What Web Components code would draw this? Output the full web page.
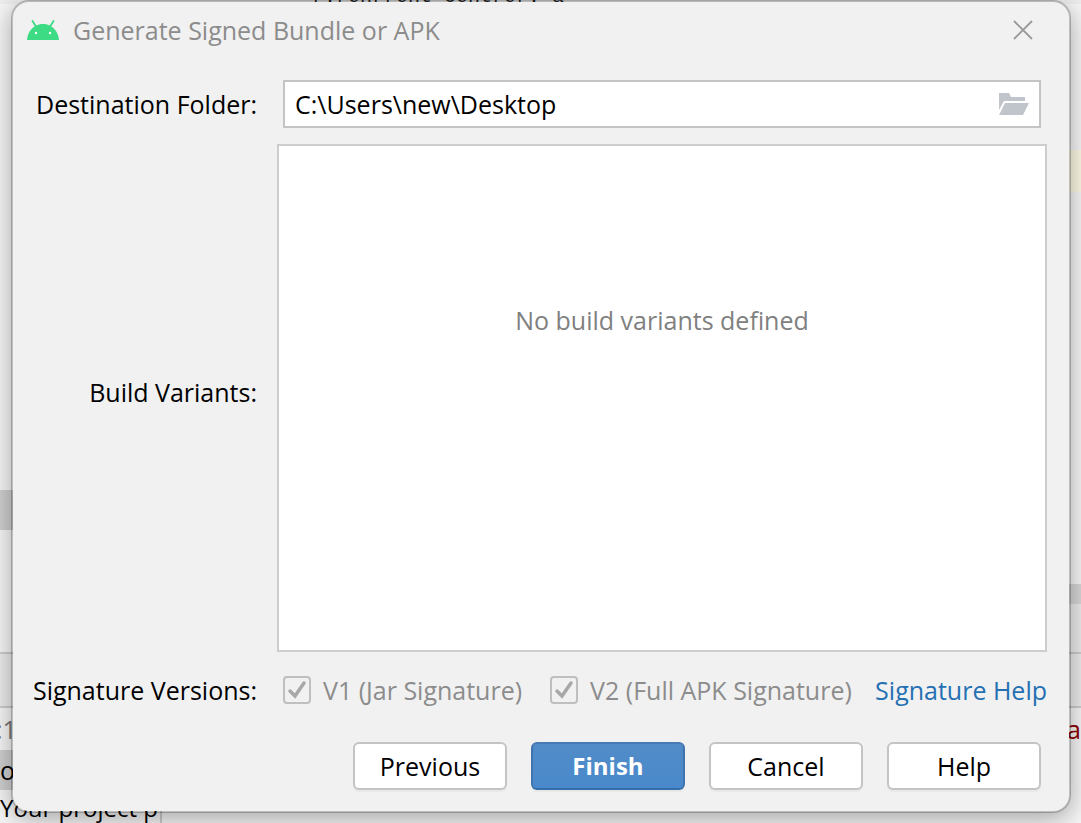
<!DOCTYPE html>
<html lang="en">
<head>
<meta charset="utf-8">
<title>Generate Signed Bundle or APK</title>
<style>
html,body{margin:0;height:100%}
body{font:25px/32px "Open Sans","Noto Sans",sans-serif;color:#000;overflow:hidden}
</style>
</head>
<body>
<app-screen></app-screen>
<script>
const define=(name,html)=>customElements.define(name,class extends HTMLElement{
  constructor(){
    super();
    const t=document.createElement('template');
    t.innerHTML=html;
    this.attachShadow({mode:'open'}).append(t.content.cloneNode(true));
  }
});

define('ide-backdrop',`
<style>
:host{position:absolute;inset:0;background:#f5f5f5;overflow:hidden;display:flex;flex-direction:column}
.code{height:4px;display:flex;align-items:flex-end;padding-left:312px;background:#ededed;font:20px/14px "Liberation Mono",monospace;white-space:pre;color:#222}
.sides{flex:1;display:flex;justify-content:space-between}
.side{width:162px;display:flex;flex-direction:column;white-space:nowrap}
.right{width:14px}
.gap{height:486px}.mark{height:40px;background:#cfcfcf}.blank{height:122px}
.panel{height:52px;background:#ebebeb;border:solid #ccc;border-width:2px 0}
.line{height:42px;line-height:42px}
.num{color:#777;text-indent:-4px}.sel{background:#cfcfcf;height:40px;line-height:40px}
.msg{border-right:2px solid #ccc;font-size:24px;line-height:36px}
.hint{height:42px;background:#fcf8e4;margin-top:146px}
.stripe{height:20px;background:#d6d6d6;margin-top:392px}
.tab{height:48px;background:#ebebeb}
.err{color:#8b0000;text-align:right}
</style>
<div class="code">r:ronrront contror: a</div>
<div class="sides">
  <div class="side"><div class="gap"></div><div class="mark"></div><div class="blank"></div><div class="panel"></div><div class="line num">:1</div><div class="line sel">o</div><div class="line msg">Your project p</div></div>
  <div class="side right"><div class="hint"></div><div class="stripe"></div><div class="tab"></div><div class="panel"></div><div class="line err">a</div></div>
</div>`);

define('android-icon',`
<style>:host{display:block;width:32px;height:20px}svg{display:block}</style>
<svg width="32" height="20" viewBox="0 0 32 20"><path d="M0 20C.6 13 4 8.500 8.500 6 11 4.600 13 4 16 4S21 4.600 23.500 6C28 8.500 31.400 13 32 20Z" fill="#3ddc84"/><path d="M5.500 1 9.500 7.500M26.500 1 22.500 7.500" stroke="#3ddc84" stroke-width="1.800" stroke-linecap="round"/><circle cx="9" cy="13" r="1.200" fill="#fff"/><circle cx="23" cy="13" r="1.200" fill="#fff"/></svg>`);

define('title-bar',`
<style>
:host{display:flex;align-items:center;height:56px;padding:0 34px 0 14px;color:#8c8c8c}
h1{font:inherit;margin:0 auto 0 14px}
button{border:0;background:none;padding:0;width:24px;height:24px;display:grid;place-items:center}
</style>
<android-icon></android-icon><h1><slot></slot></h1>
<button aria-label="Close"><svg width="20" height="20" viewBox="0 0 20 20"><path d="M1 1 19 19M19 1 1 19" stroke="#999" stroke-width="1.800"/></svg></button>`);

define('folder-field',`
<style>
:host{display:block}
.row{display:grid;grid-template-columns:244px 1fr;column-gap:26px;align-items:center}
label{text-align:right;white-space:nowrap}
.box{display:flex;align-items:center;height:44px;border:2px solid #c4c4c4;background:#fff;margin-right:6px;padding:0 10px}
input{flex:1;min-width:0;border:0;outline:0;padding:0;background:none;font:inherit;color:inherit}
button{border:0;background:none;padding:0;width:30px;height:22px}
svg{display:block}
</style>
<div class="row"><label for="dest"><slot></slot></label>
<div class="box"><input id="dest" value="C:\\Users\\new\\Desktop"><button aria-label="Browse"><svg width="30" height="22" viewBox="0 0 30 22"><path d="M0 0H10L12 4H26V8H5L0 17ZM6 10H30L24 22H0Z" fill="#bfc5ca"/></svg></button></div></div>`);

define('variant-list',`
<style>
:host{display:grid;grid-template-columns:244px 1fr;column-gap:20px;align-items:stretch}
.label{text-align:right;align-self:center;padding-bottom:12px}
.list{border:2px solid #cdcdcd;background:#fff;color:#808080;text-align:center;padding-top:158px}
</style>
<div class="label" id="l">Build Variants:</div><div class="list" role="listbox" aria-labelledby="l"><slot></slot></div>`);

define('check-option',`
<style>
:host{display:block;color:#8c8c8c}
label{display:flex;align-items:center;gap:12px;white-space:nowrap}
input{appearance:none;margin:0;width:28px;height:28px;border:2px solid #bfbfbf;border-radius:4px;background:url('data:image/svg+xml,<svg xmlns="http://www.w3.org/2000/svg" viewBox="0 0 24 24"><path d="M5 13 10 18 19 5" fill="none" stroke="%23a8a8a8" stroke-width="3.500" stroke-linecap="round"/></svg>') center/24px}
</style>
<label><input type="checkbox" checked disabled><span><slot></slot></span></label>`);

define('signature-row',`
<style>
:host{display:grid;grid-template-columns:244px 1fr;column-gap:26px;align-items:center}
.label{text-align:right;white-space:nowrap}
.opts{display:flex;align-items:center;column-gap:28px}
a{color:#2470b3;text-decoration:none;white-space:nowrap}
.end{flex:1;display:flex;justify-content:flex-end;margin-left:-8px}
</style>
<div class="label">Signature Versions:</div>
<div class="opts"><check-option>V1 (Jar Signature)</check-option><check-option>V2 (Full APK Signature)</check-option><div class="end"><a href="#help">Signature Help</a></div></div>`);

define('push-button',`
<style>
:host{display:block}
button{display:block;width:154px;height:48px;border:2px solid #c4c4c4;border-radius:6px;background:#fff;font:inherit;color:#000;padding:0;box-shadow:0 2px 0 #e8e8e8}
:host([primary]) button{background:linear-gradient(#528cc7,#4989cc);border-color:#4779b5 #3f74ad #356dac;color:#fff;font-weight:700;font-size:24px}
</style><button><slot></slot></button>`);

define('signed-dialog',`
<style>
:host{position:relative;display:flex;flex-direction:column;box-sizing:border-box;flex:1;margin:0 10px 10px 11px;border:2px solid rgba(0,0,0,.22);border-radius:18px;background:#f1f1f1;background-clip:padding-box;box-shadow:0 6px 24px rgba(0,0,0,.32)}
.body{flex:1;display:flex;flex-direction:column;padding:22px 22px 21px 0}
variant-list{flex:1;margin:16px 0 22px}
.actions{display:flex;justify-content:flex-end;gap:24px;margin:36px 6px 0 0}
</style>
<title-bar>Generate Signed Bundle or APK</title-bar>
<div class="body">
<folder-field>Destination Folder:</folder-field>
<variant-list>No build variants defined</variant-list>
<signature-row></signature-row>
<div class="actions"><push-button>Previous</push-button><push-button primary>Finish</push-button><push-button>Cancel</push-button><push-button>Help</push-button></div>
</div>`);

define('app-screen',`
<style>:host{position:relative;display:flex;flex-direction:column;min-height:100vh}</style>
<ide-backdrop></ide-backdrop><signed-dialog role="dialog"></signed-dialog>`);
</script>
</body>
</html>
